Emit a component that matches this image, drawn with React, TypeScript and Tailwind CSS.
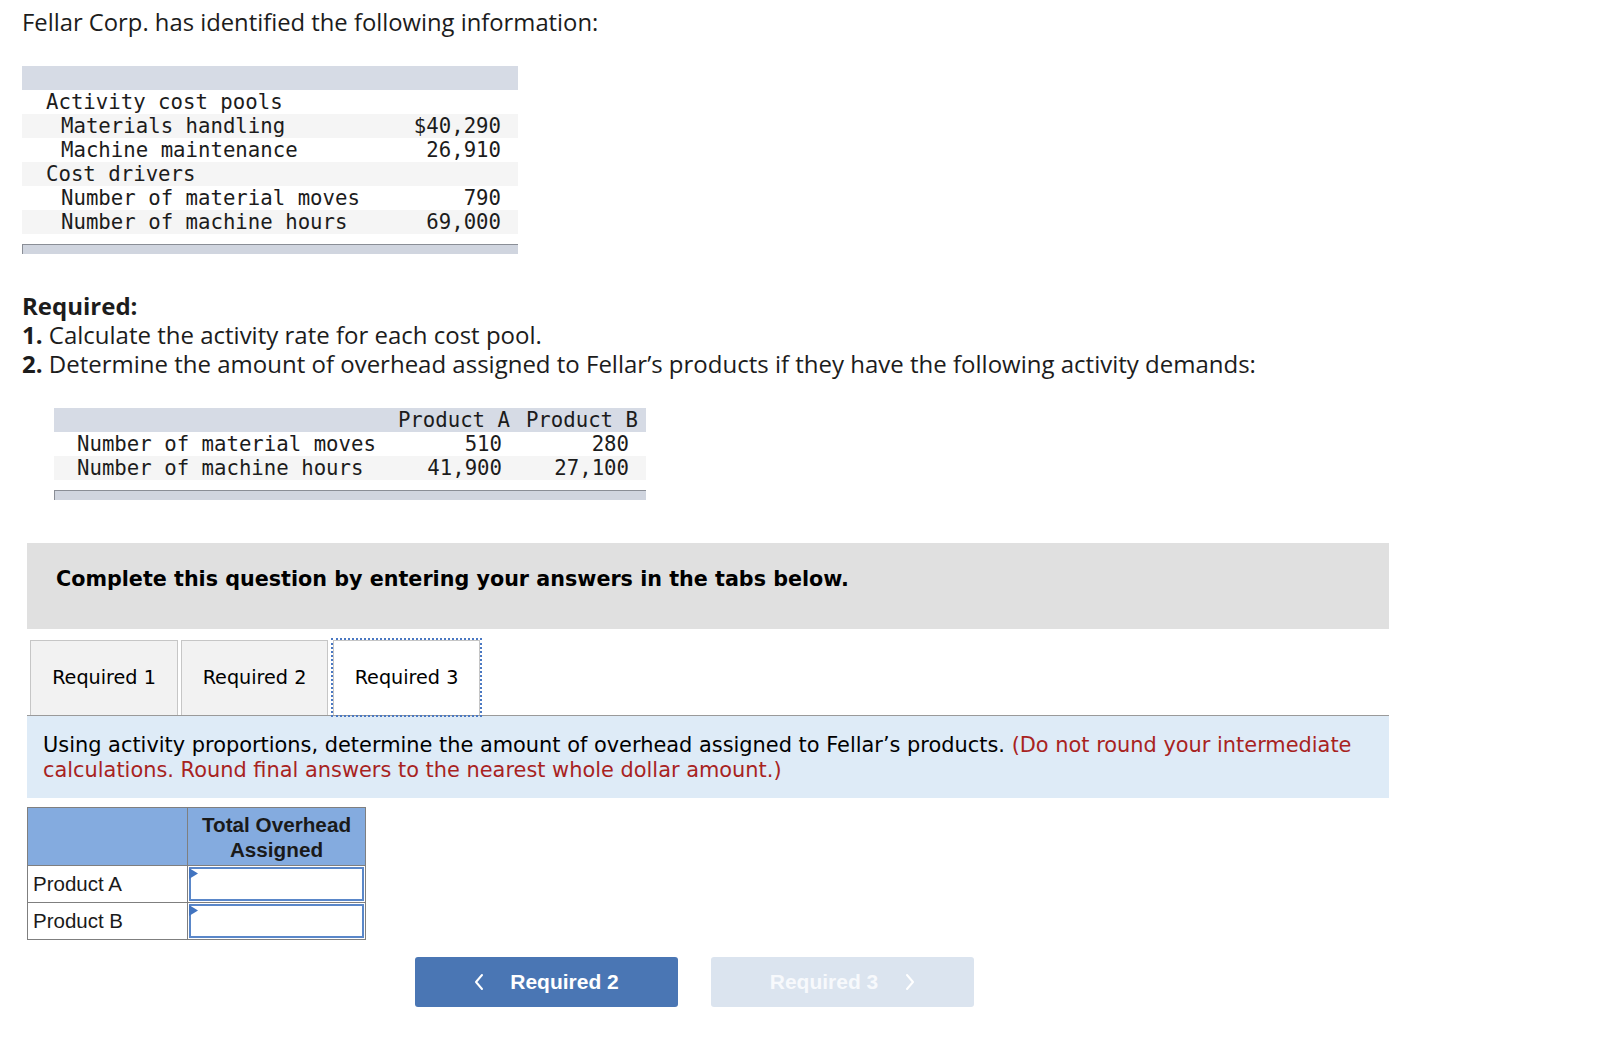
import React from "react";

const mono = "font-['DejaVu_Sans_Mono',monospace]";

function Chevron({ dir }: { dir: "left" | "right" }) {
  return (
    <svg width="10" height="18" viewBox="0 0 10 18" fill="none">
      {dir === "left" ? (
        <polyline points="8,2 2,9 8,16" stroke="white" strokeWidth="2" strokeLinecap="round" strokeLinejoin="round" />
      ) : (
        <polyline points="2,2 8,9 2,16" stroke="white" strokeWidth="2" strokeLinecap="round" strokeLinejoin="round" />
      )}
    </svg>
  );
}

function InputCell() {
  return (
    <div className="relative flex-1 p-[1px]">
      <div className="h-full w-full border-2 border-[#5a87c9] bg-white" />
      <svg className="absolute left-[1px] top-[2px]" width="9" height="11" viewBox="0 0 9 11">
        <polygon points="0,0 9,5.5 0,11" fill="#4274c0" />
      </svg>
    </div>
  );
}

export default function App() {
  return (
    <div className="w-[1602px] min-h-[1050px] bg-white text-[#1c1c1c]">
      {/* Title */}
      <div className="pl-[22px] pt-[8px]">
        <p className="font-['Open_Sans',sans-serif] text-[23.8px] leading-[29px]">
          Fellar Corp. has identified the following information:
        </p>
      </div>

      {/* Table 1 */}
      <div className={`ml-[22px] mt-[29px] w-[496px] ${mono} text-[20.7px] leading-[24px]`}>
        <div className="h-[24px] bg-[#d6dbe5]" />
        <div className="flex h-[24px] items-center bg-white pl-[24px]">Activity cost pools</div>
        <div className="flex h-[24px] items-center justify-between bg-[#f5f5f5] pl-[39px] pr-[17px]">
          <span>Materials handling</span>
          <span>$40,290</span>
        </div>
        <div className="flex h-[24px] items-center justify-between bg-white pl-[39px] pr-[17px]">
          <span>Machine maintenance</span>
          <span>26,910</span>
        </div>
        <div className="flex h-[24px] items-center bg-[#f5f5f5] pl-[24px]">Cost drivers</div>
        <div className="flex h-[24px] items-center justify-between bg-white pl-[39px] pr-[17px]">
          <span>Number of material moves</span>
          <span>790</span>
        </div>
        <div className="flex h-[24px] items-center justify-between bg-[#f5f5f5] pl-[39px] pr-[17px]">
          <span>Number of machine hours</span>
          <span>69,000</span>
        </div>
        <div className="h-[10px]" />
        <div className="h-[10px] border-l border-t border-[#8a8e96] bg-[#d0d5df]" />
      </div>

      {/* Required */}
      <div className="ml-[22px] mt-[37px] font-['Open_Sans',sans-serif] text-[24px] leading-[29px]">
        <p className="font-bold">Required:</p>
        <p>
          <span className="font-bold">1.</span> Calculate the activity rate for each cost pool.
        </p>
        <p>
          <span className="font-bold">2.</span> Determine the amount of overhead assigned to Fellar’s products if they
          have the following activity demands:
        </p>
      </div>

      {/* Table 2 */}
      <div className={`ml-[54px] mt-[30px] w-[592px] ${mono} text-[20.7px] leading-[24px]`}>
        <div className="flex h-[24px] items-center bg-[#d6dbe5]">
          <div className="flex-1" />
          <div className="w-[124px] pr-[4px] text-right">Product A</div>
          <div className="w-[132px] pr-[8px] text-right">Product B</div>
        </div>
        <div className="flex h-[24px] items-center bg-white">
          <div className="flex-1 pl-[23px]">Number of material moves</div>
          <div className="w-[124px] pr-[12px] text-right">510</div>
          <div className="w-[132px] pr-[17px] text-right">280</div>
        </div>
        <div className="flex h-[24px] items-center bg-[#f5f5f5]">
          <div className="flex-1 pl-[23px]">Number of machine hours</div>
          <div className="w-[124px] pr-[12px] text-right">41,900</div>
          <div className="w-[132px] pr-[17px] text-right">27,100</div>
        </div>
        <div className="h-[10px]" />
        <div className="h-[10px] border-l border-t border-[#8a8e96] bg-[#d0d5df]" />
      </div>

      {/* Instruction box */}
      <div className="ml-[27px] mt-[43px] h-[86px] w-[1362px] bg-[#e0e0e0] pl-[29px] pt-[24px]">
        <p className="font-['DejaVu_Sans',sans-serif] text-[20.7px] font-bold leading-[24px] text-black">
          Complete this question by entering your answers in the tabs below.
        </p>
      </div>

      {/* Tabs */}
      <div className="ml-[27px] mt-[11px] flex h-[76px] w-[1362px] items-start border-b border-[#9a9a9a] font-['DejaVu_Sans',sans-serif] text-[19.2px] text-black">
        <div className="ml-[3px] flex h-[75px] w-[148px] items-center justify-center border border-b-0 border-[#c6c6c6] bg-[#f2f2f2]">
          Required 1
        </div>
        <div className="ml-[3px] flex h-[75px] w-[147px] items-center justify-center border border-b-0 border-[#c6c6c6] bg-[#f2f2f2]">
          Required 2
        </div>
        <div className="relative ml-[5px] flex h-[75px] w-[147px] items-center justify-center border border-b-0 border-[#c6c6c6] bg-white outline-2 outline-dotted outline-[#4a78c2]">
          Required 3
        </div>
      </div>

      {/* Info box */}
      <div className="ml-[27px] h-[82px] w-[1362px] bg-[#deebf7] pl-[16px] pr-[20px] pt-[17px] font-['DejaVu_Sans',sans-serif] text-[20.9px] leading-[24.5px] text-black">
        Using activity proportions, determine the amount of overhead assigned to Fellar’s products.{" "}
        <span className="text-[#a8231f]">
          (Do not round your intermediate calculations. Round final answers to the nearest whole dollar amount.)
        </span>
      </div>

      {/* Answer table */}
      <div className="ml-[27px] mt-[9px] w-[339px] border border-[#7f7f7f] font-['Liberation_Sans',Arial,sans-serif] text-[20.5px] text-[#1a1a1a]">
        <div className="flex h-[57px] bg-[#84abdf]">
          <div className="w-[160px] border-r border-[#7f7f7f]" />
          <div className="flex flex-1 items-center justify-center text-center text-[20.7px] font-bold leading-[25px]">
            <span>
              Total Overhead
              <br />
              Assigned
            </span>
          </div>
        </div>
        <div className="flex h-[37px] border-t border-[#7f7f7f]">
          <div className="flex w-[160px] items-center border-r border-[#7f7f7f] pl-[5px]">Product A</div>
          <InputCell />
        </div>
        <div className="flex h-[37px] border-t border-[#7f7f7f]">
          <div className="flex w-[160px] items-center border-r border-[#7f7f7f] pl-[5px]">Product B</div>
          <InputCell />
        </div>
      </div>

      {/* Nav buttons */}
      <div className="mt-[17px] flex font-['Liberation_Sans',Arial,sans-serif] text-[21px] font-bold">
        <button className="ml-[415px] flex h-[50px] w-[263px] items-center justify-center gap-[26px] rounded-[3px] bg-[#4a76b4] text-white">
          <Chevron dir="left" />
          <span>Required 2</span>
        </button>
        <button className="ml-[33px] flex h-[50px] w-[263px] items-center justify-center gap-[27px] rounded-[3px] bg-[#dbe4ef] text-[#f7f9fc]">
          <span>Required 3</span>
          <Chevron dir="right" />
        </button>
      </div>
    </div>
  );
}
